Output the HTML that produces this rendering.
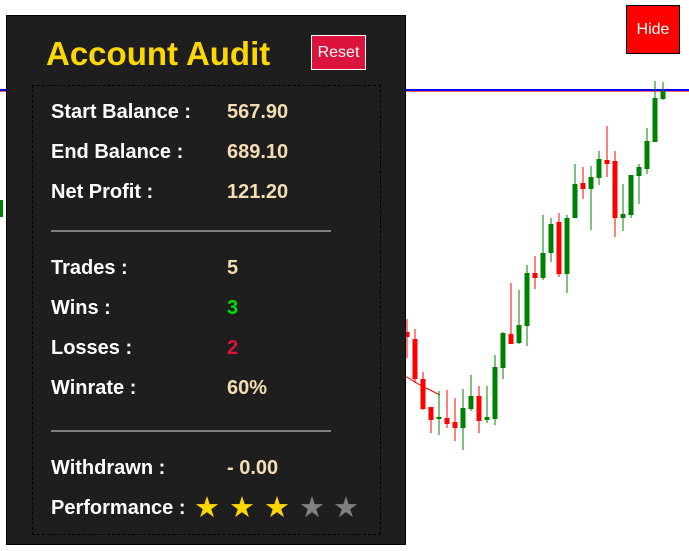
<!DOCTYPE html>
<html><head><style>
body{margin:0;width:689px;height:551px;background:#fff;position:relative;overflow:hidden;font-family:"Liberation Sans",Arial,sans-serif}
#chart{position:absolute;left:0;top:0}
#panel{position:absolute;left:6px;top:15px;width:398px;height:528px;background:#1e1e1e;border:1px solid #000}
#title{position:absolute;left:39px;top:19px;color:#ffd700;font-weight:bold;font-size:33px;line-height:38px;white-space:nowrap}
#reset{position:absolute;left:304px;top:19px;width:53px;height:33px;background:#dc143c;border:1px solid #fff;color:#fff;font-size:16px;line-height:33px;text-align:center}
#box{position:absolute;left:25px;top:69px;width:347px;height:448px;border:1px dashed #000}
.r{position:absolute;font-weight:bold;font-size:20px;line-height:22px;white-space:nowrap}
.l{left:44px;color:#fff}
.v{left:220px;color:#f5deb3}
.hr{position:absolute;left:44px;width:280px;height:2px;background:#808080}
.s{position:absolute;top:477px;font-size:29px;line-height:30px}
#hide{position:absolute;left:626px;top:5px;width:52px;height:47px;background:#f00;border:1px solid #000;color:#fff;font-size:16px;line-height:47px;text-align:center}
</style></head><body>
<svg id="chart" width="689" height="551">
<rect x="0" y="89" width="689" height="2" fill="#00f"/>
<rect x="0" y="91" width="689" height="1" fill="#f00" opacity="0.6"/>
<polyline points="405,376 420,385 440,395" fill="none" stroke="#f00" stroke-width="1"/>
<rect x="0" y="200" width="3" height="17" fill="#008000"/>
<g id="c"></g>
</svg>
<script>
var d=[[407,'r',319,358,332,337],[415,'r',329,383,339,379],[423,'r',372,410,379,409],[431,'r',407,433,407,420],[439,'g',391,435,417,419],[447,'r',390,428,418,424],[455,'r',398,441,422,428],[463,'g',389,450,408,428],[471,'g',375,411,396,409],[479,'r',386,433,396,421],[487,'g',386,423,417,420],[495,'g',355,425,367,419],[503,'g',332,379,333,368],[511,'r',283,344,334,344],[519,'g',290,344,325,343],[527,'g',265,346,273,326],[535,'r',256,289,273,278],[543,'g',215,280,253,278],[551,'g',218,262,224,253],[559,'r',213,277,222,274],[567,'g',215,293,218,274],[575,'g',164,218,184,218],[583,'r',167,199,183,189],[591,'g',166,230,177,189],[599,'g',151,185,159,178],[607,'r',126,177,160,164],[615,'r',151,237,161,218],[623,'g',184,231,214,218],[631,'g',175,218,175,215],[639,'g',164,204,167,176],[647,'g',128,174,141,169],[655,'g',81,142,98,142],[663,'g',82,100,91,99]];
var s='';d.forEach(function(c){var col=c[1]=='r'?'#f00':'#008000';s+='<rect x="'+(c[0]-0.5)+'" y="'+c[2]+'" width="1" height="'+(c[3]-c[2])+'" fill="'+col+'"/><rect x="'+(c[0]-2.5)+'" y="'+c[4]+'" width="5" height="'+Math.max(2,c[5]-c[4])+'" fill="'+col+'"/>';});
document.getElementById('c').innerHTML=s;
</script>
<div id="panel">
<div id="title">Account Audit</div>
<div id="reset">Reset</div>
<div id="box"></div>
<div class="r l" style="top:85px">Start Balance :</div><div class="r v" style="top:85px">567.90</div>
<div class="r l" style="top:125px">End Balance :</div><div class="r v" style="top:125px">689.10</div>
<div class="r l" style="top:165px">Net Profit :</div><div class="r v" style="top:165px">121.20</div>
<div class="hr" style="top:214px"></div>
<div class="r l" style="top:241px">Trades :</div><div class="r v" style="top:241px">5</div>
<div class="r l" style="top:281px">Wins :</div><div class="r v" style="top:281px;color:#00e000">3</div>
<div class="r l" style="top:321px">Losses :</div><div class="r v" style="top:321px;color:#dc143c">2</div>
<div class="r l" style="top:361px">Winrate :</div><div class="r v" style="top:361px">60%</div>
<div class="hr" style="top:414px"></div>
<div class="r l" style="top:441px">Withdrawn :</div><div class="r v" style="top:441px">- 0.00</div>
<div class="r l" style="top:481px">Performance :</div>
<div class="s" style="left:187px;color:#ffd700">★</div>
<div class="s" style="left:222px;color:#ffd700">★</div>
<div class="s" style="left:257px;color:#ffd700">★</div>
<div class="s" style="left:292px;color:#808080">★</div>
<div class="s" style="left:326px;color:#808080">★</div>
</div>
<div id="hide">Hide</div>
</body></html>
